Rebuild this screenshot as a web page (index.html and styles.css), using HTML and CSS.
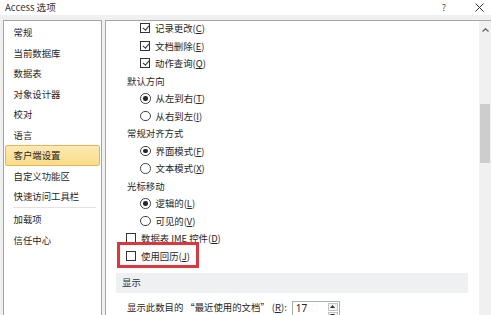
FILE: index.html
```html
<!DOCTYPE html>
<html lang="zh-CN">
<head>
  <meta charset="UTF-8">
  <title>Access 选项</title>
  <link rel="stylesheet" href="styles.css">
</head>
<body>
  <div class="titlebar">
    <span class="title">Access 选项</span>
    <span class="help">?</span>
    <span class="close">
      <svg width="9" height="9" viewBox="0 0 9 9"><path d="M0.5 0.5L8.5 8.5M8.5 0.5L0.5 8.5" stroke="#333" stroke-width="1"/></svg>
    </span>
  </div>

  <div class="dialog">
    <ul class="nav">
      <li>常规</li>
      <li>当前数据库</li>
      <li>数据表</li>
      <li>对象设计器</li>
      <li>校对</li>
      <li>语言</li>
      <li class="active">客户端设置</li>
      <li>自定义功能区</li>
      <li>快速访问工具栏</li>
      <li class="sep"></li>
      <li>加载项</li>
      <li>信任中心</li>
    </ul>

    <div class="pane">
      <div class="content">
        <div class="row item"><span class="check on"></span>记录更改(<u>C</u>)</div>
        <div class="row item"><span class="check on"></span>文档删除(<u>E</u>)</div>
        <div class="row item"><span class="check on"></span>动作查询(<u>Q</u>)</div>
        <div class="row group">默认方向</div>
        <div class="row item"><span class="radio on"></span>从左到右(<u>T</u>)</div>
        <div class="row item"><span class="radio"></span>从右到左(<u>I</u>)</div>
        <div class="row group">常规对齐方式</div>
        <div class="row item"><span class="radio on"></span>界面模式(<u>F</u>)</div>
        <div class="row item"><span class="radio"></span>文本模式(<u>X</u>)</div>
        <div class="row group">光标移动</div>
        <div class="row item"><span class="radio on"></span>逻辑的(<u>L</u>)</div>
        <div class="row item"><span class="radio"></span>可见的(<u>V</u>)</div>
        <div class="row top"><span class="check"></span>数据表 IME 控件(<u>D</u>)</div>
        <div class="row top marked"><span class="check"></span>使用回历(<u>J</u>)</div>

        <div class="section">显示</div>

        <div class="row-input">
          <span class="label">显示此数目的 “最近使用的文档” (<u>R</u>):</span>
          <span class="spin-box">
            <span class="value">17</span>
            <span class="spin">
              <span class="spin-btn"><svg width="5" height="3" viewBox="0 0 5 3"><path d="M0 3L2.5 0L5 3Z" fill="#333"/></svg></span>
              <span class="spin-btn"><svg width="5" height="3" viewBox="0 0 5 3"><path d="M0 0L2.5 3L5 0Z" fill="#333"/></svg></span>
            </span>
          </span>
        </div>
      </div>

      <div class="scrollbar">
        <div class="sb-up">
          <svg width="7" height="4" viewBox="0 0 7 4"><path d="M0.5 3.5L3.5 0.8L6.5 3.5" fill="none" stroke="#606060" stroke-width="1.2"/></svg>
        </div>
        <div class="sb-thumb"></div>
      </div>
    </div>
  </div>
</body>
</html>
```

FILE: styles.css
```css
body {
  margin: 0;
  background-color: #f0f0f0;
  font-family: "Noto Sans CJK SC", "Noto Sans", sans-serif;
  font-size: 9.4px;
  color: #262626;
  overflow: hidden;
  height: 315px;
}

.titlebar {
  height: 15px;
  background-color: white;
  display: flex;
  align-items: center;
  line-height: 13px;
}

.title {
  margin-left: 5px;
  font-size: 9.6px;
  color: #333;
}

.help {
  margin-left: auto;
  font-size: 9px;
  color: #444;
}

.close {
  margin: 0 7px 0 29px;
  display: flex;
}

.dialog {
  display: flex;
  gap: 3px;
  padding: 5px 0 0 3px;
  height: 295px;
}

.nav {
  list-style: none;
  margin: 0;
  padding: 1px 1px 0 1px;
  width: 95px;
  background-color: white;
  border: 1px solid #a5a5a5;
  border-bottom: none;
}

.nav li {
  height: 18.5px;
  line-height: 18.5px;
  padding-left: 7.5px;
  border: 1px solid transparent;
  border-radius: 2px;
  white-space: nowrap;
}

.nav li.active {
  background: linear-gradient(#fde9b0, #fbdc8a);
  border-color: #e4b75a;
}

.nav li.sep {
  height: 0;
  padding: 0;
  border: none;
  border-top: 1px solid #e2e2e2;
  margin: 0.75px 4px 0.75px 8px;
  border-radius: 0;
}

.pane {
  flex: 1;
  display: flex;
  background-color: white;
  border-left: 1px solid #a5a5a5;
  border-top: 1px solid #a5a5a5;
  overflow: hidden;
}

.content {
  flex: 1;
  padding: 0 11px 0 10px;
  margin-top: -1.5px;
}

.row {
  height: 17.5px;
  display: flex;
  align-items: center;
  white-space: nowrap;
}

.row.group {
  padding-left: 11px;
}

.row.item {
  padding-left: 24px;
}

.row.top {
  padding-left: 10px;
}

.row u {
  text-underline-offset: 1px;
}

.check {
  width: 8px;
  height: 8px;
  border: 1px solid #333;
  margin-right: 5px;
  flex-shrink: 0;
  position: relative;
}

.check.on::after {
  content: "";
  position: absolute;
  left: 2.5px;
  top: 0px;
  width: 2.5px;
  height: 5px;
  border-right: 1px solid #333;
  border-bottom: 1px solid #333;
  transform: rotate(40deg);
}

.radio {
  width: 8.5px;
  height: 8.5px;
  border: 1px solid #444;
  border-radius: 50%;
  margin-right: 5px;
  flex-shrink: 0;
  display: flex;
  align-items: center;
  justify-content: center;
}

.radio.on::after {
  content: "";
  width: 4.5px;
  height: 4.5px;
  border-radius: 50%;
  background-color: #262626;
}

.marked {
  position: relative;
}

.marked::after {
  content: "";
  position: absolute;
  left: 1px;
  top: -5.5px;
  width: 82px;
  height: 26px;
  border: 3px solid #d8393f;
  box-sizing: border-box;
}

.section {
  margin-top: 8.5px;
  height: 19.5px;
  line-height: 19.5px;
  padding-left: 6px;
  background-color: #eff0f2;
  color: #333;
}

.row-input {
  display: flex;
  align-items: flex-start;
  margin-top: 8px;
  padding-left: 11px;
  white-space: nowrap;
}

.row-input .label {
  line-height: 13px;
  padding-top: 0;
}

.spin-box {
  display: flex;
  margin-left: 5px;
  width: 46px;
  height: 18px;
  border: 1px solid #abadb3;
  background-color: white;
}

.spin-box .value {
  flex: 1;
  padding-left: 3px;
  line-height: 13px;
  font-family: "Noto Sans", sans-serif;
  font-size: 10px;
}

.spin {
  width: 10px;
  margin: 1px 1px 0 0;
  display: flex;
  flex-direction: column;
  gap: 1px;
}

.spin-btn {
  height: 8px;
  border: 1px solid #c4c4c4;
  background-color: #f2f2f2;
  display: flex;
  align-items: center;
  justify-content: center;
}

.scrollbar {
  width: 12px;
  background-color: #f0f0f0;
  flex-shrink: 0;
}

.sb-up {
  height: 17px;
  display: flex;
  justify-content: center;
  align-items: center;
}

.sb-thumb {
  margin: 66px 1px 0 1px;
  height: 59px;
  background-color: #cdcdcd;
}
```
